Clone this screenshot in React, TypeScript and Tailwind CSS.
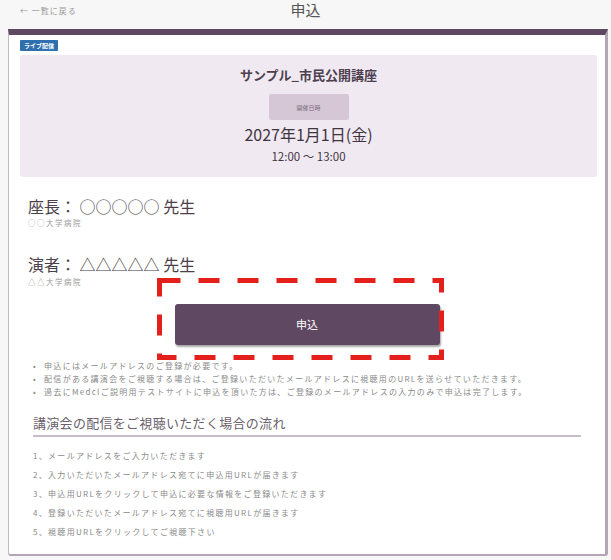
import React from 'react';

const font = "font-['Noto_Sans_CJK_JP','Noto_Sans',sans-serif]";

const notes = [
  '申込にはメールアドレスのご登録が必要です。',
  '配信がある講演会をご視聴する場合は、ご登録いただいたメールアドレスに視聴用のURLを送らせていただきます。',
  '過去にMedclご説明用テストサイトに申込を頂いた方は、ご登録のメールアドレスの入力のみで申込は完了します。',
];

const steps = [
  '1、メールアドレスをご入力いただきます',
  '2、入力いただいたメールアドレス宛てに申込用URLが届きます',
  '3、申込用URLをクリックして申込に必要な情報をご登録いただきます',
  '4、登録いただいたメールアドレス宛てに視聴用URLが届きます',
  '5、視聴用URLをクリックしてご視聴下さい',
];

export default function App() {
  return (
    <div className={`${font} bg-[#f7f7f7] w-[611px] h-[560px] overflow-hidden`}>
      {/* header */}
      <div className="relative h-[29px]">
        <span className="absolute left-[20px] top-[5px] text-[8px] leading-[12px] tracking-[1px] text-[#999]">← 一覧に戻る</span>
        <div className="pt-[1px] text-center text-[15px] leading-[17px] text-[#555]">申込</div>
      </div>

      {/* card */}
      <div className="ml-[8px] w-[600px] h-[527px] bg-white border-t-[6px] border-t-[#5e4862] border-l border-l-[#c4bac5] border-r-[3px] border-r-[#b3a6b4] border-b-[2px] border-b-[#b3a6b4] rounded-b-[3px] px-[11px] pt-[5px]">
        <div className="flex h-[11px]">
          <span className="bg-[#2f6fae] text-white text-[6px] leading-[11px] px-[4px] rounded-[1px] font-bold">ライブ配信</span>
        </div>

        <div className="mt-[4px] bg-[#f1e9f2] rounded-[3px] w-[577px] h-[122px] flex flex-col items-center pt-[12px]">
          <div className="text-[13px] leading-[16px] font-bold text-[#4d404e]">サンプル_市民公開講座</div>
          <div className="mt-[11px] w-[80px] h-[26px] bg-[#d6c7d7] rounded-[2px] flex items-center justify-center text-[6px] text-[#7b6d7c]">開催日時</div>
          <div className="mt-[3px] text-[16px] leading-[22px] text-[#3f3540]">2027年1月1日(金)</div>
          <div className="mt-[4px] text-[11.5px] leading-[14px] text-[#3f3540]">12:00 〜 13:00</div>
        </div>

        <div className="pl-[8px] mt-[18px]">
          <div className="text-[16px] leading-[22px] text-[#4a3f4b]">座長： ○○○○○ 先生</div>
          <div className="mt-[1px] text-[7.5px] leading-[10px] tracking-[1.5px] text-[#999]">○○大学病院</div>
          <div className="mt-[25px] text-[16px] leading-[22px] text-[#4a3f4b]">演者： △△△△△ 先生</div>
          <div className="mt-[2px] text-[7.5px] leading-[10px] tracking-[1.5px] text-[#999]">△△大学病院</div>
        </div>

        <div className="flex justify-center mt-[17px]">
          <div className="relative">
            <button className="block w-[265px] h-[41px] bg-[#5e4862] rounded-[3px] shadow-[1px_2px_2px_rgba(0,0,0,0.35)] text-white text-[11px]">申込</button>
            {/* red dashed annotation */}
            <svg className="absolute left-[-18px] top-[-26px]" width="287" height="82" viewBox="0 0 287 82">
              <rect x="2.5" y="2.5" width="282" height="77" fill="none" stroke="#e3201b" strokeWidth="5" strokeDasharray="21 18" />
            </svg>
          </div>
        </div>

        <ul className="pl-[13px] mt-[14px] text-[8px] leading-[13px] tracking-[1.3px] text-[#8a8a8a]">
          {notes.map((n) => (
            <li key={n} className="flex gap-[7px]">
              <span>•</span>
              <span>{n}</span>
            </li>
          ))}
        </ul>

        <div className="mx-[13px] mt-[16px] pb-[3px] border-b-2 border-[#cbbccb] text-[13px] leading-[18px] tracking-[0.3px] text-[#6b5f6b]">
          講演会の配信をご視聴いただく場合の流れ
        </div>

        <ol className="ml-[13px] mt-[9px] text-[8px] tracking-[1.3px] text-[#8a8a8a]">
          {steps.map((s) => (
            <li key={s} className="leading-[19px]">{s}</li>
          ))}
        </ol>
      </div>
    </div>
  );
}
